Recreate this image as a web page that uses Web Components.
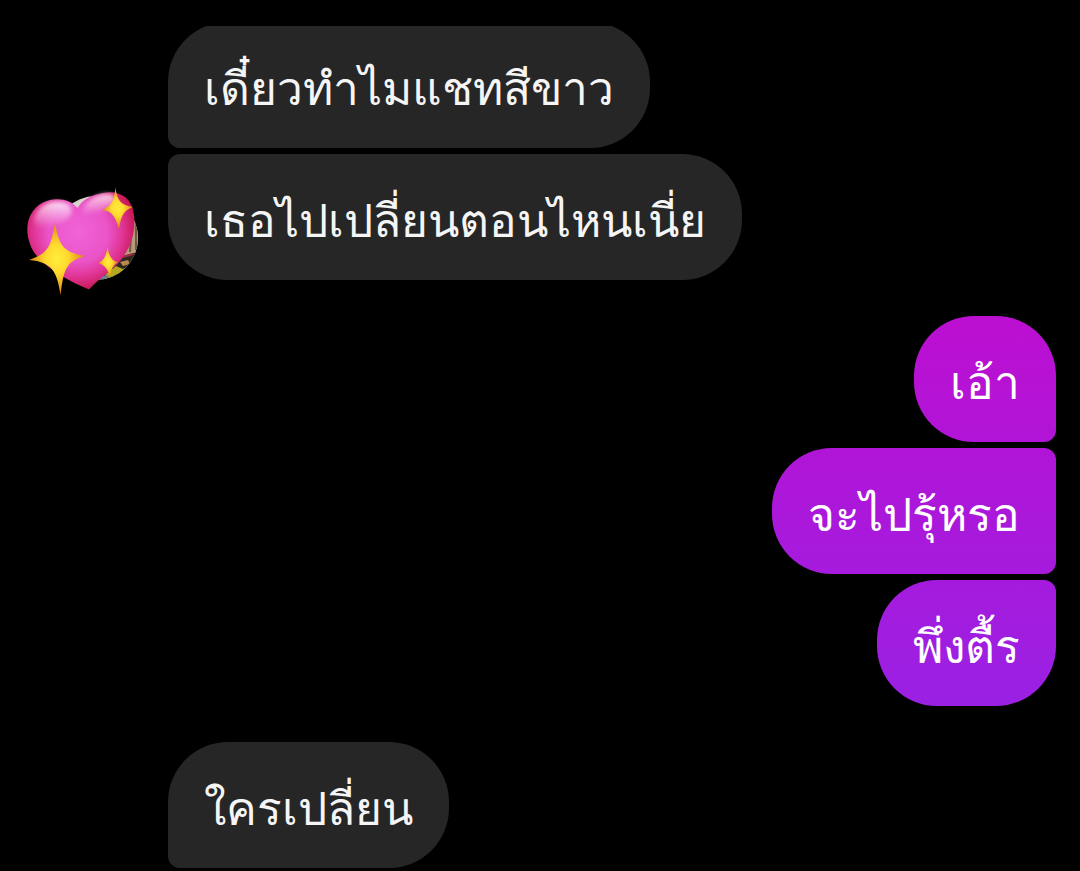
<!DOCTYPE html>
<html lang="th">
<head>
<meta charset="utf-8">
<meta name="viewport" content="width=device-width, initial-scale=1">
<title>แชท</title>
<style>
  html { background: #000; }
  body { margin: 0; background: #000; overflow: hidden; font-family: Roboto, sans-serif; }
</style>
</head>
<body>
<chat-thread>
  <message-group side="in">
    <chat-avatar slot="avatar"></chat-avatar>
    <chat-bubble side="in" place="middle">เดี๋ยวทำไมแชทสีขาว</chat-bubble>
    <chat-bubble side="in" place="last">เธอไปเปลี่ยนตอนไหนเนี่ย</chat-bubble>
  </message-group>
  <message-group side="out">
    <chat-bubble side="out" place="first">เอ้า</chat-bubble>
    <chat-bubble side="out" place="middle">จะไปรุ้หรอ</chat-bubble>
    <chat-bubble side="out" place="last">พึ่งตื้ร</chat-bubble>
  </message-group>
  <message-group side="in">
    <chat-bubble side="in" place="first">ใครเปลี่ยน</chat-bubble>
  </message-group>
</chat-thread>

<script>
class ChatThread extends HTMLElement {
  constructor() {
    super();
    this.attachShadow({ mode: "open" }).innerHTML = `
      <style>
        :host { display: block; padding: 26px 24px 0; }
        main { display: flow-root; overflow: clip; }
        .list { display: flex; flex-direction: column; gap: 36px; margin-top: -4px; }
      </style>
      <main><div class="list"><slot></slot></div></main>`;
  }
}

class MessageGroup extends HTMLElement {
  constructor() {
    super();
    this.attachShadow({ mode: "open" }).innerHTML = `
      <style>
        :host { display: grid; grid-template-columns: 120px 1fr; column-gap: 24px; align-items: end; }
        .bubbles { display: flex; flex-direction: column; gap: 6px; align-items: flex-start; }
        :host([side="out"]) { grid-template-columns: 1fr; }
        :host([side="out"]) .side { display: none; }
        :host([side="out"]) .bubbles { align-items: flex-end; }
      </style>
      <div class="side"><slot name="avatar"></slot></div>
      <div class="bubbles"><slot></slot></div>`;
  }
}

class ChatBubble extends HTMLElement {
  constructor() {
    super();
    this.attachShadow({ mode: "open" }).innerHTML = `
      <style>
        :host {
          display: block; box-sizing: border-box; padding: 36px 36px 28px;
          border-radius: 60px; background: #262626; color: #f5f5f5;
          font-size: 46px; line-height: 62px; white-space: nowrap;
        }
        :host([side="in"][place="first"]), :host([side="in"][place="middle"]) { border-bottom-left-radius: 12px; }
        :host([side="in"][place="last"]) { border-top-left-radius: 12px; }
        :host([side="out"]) { background: linear-gradient(#d701c2, #8c28eb) fixed; color: #fff; }
        :host([side="out"][place="first"]) { border-bottom-right-radius: 12px; }
        :host([side="out"][place="middle"]) { border-top-right-radius: 12px; border-bottom-right-radius: 12px; }
        :host([side="out"][place="last"]) { border-top-right-radius: 12px; }
      </style>
      <slot></slot>`;
  }
}

class ChatAvatar extends HTMLElement {
  constructor() {
    super();
    this.attachShadow({ mode: "open" }).innerHTML = `
      <style>
        :host { display: block; }
        svg { display: block; overflow: visible; }
      </style>
      <svg width="120" height="96" viewBox="24 184 120 96" role="img" aria-label="avatar">
        <defs>
          <clipPath id="disc"><circle cx="96" cy="238" r="42"/></clipPath>
          <radialGradient id="heart" gradientUnits="userSpaceOnUse" cx="78" cy="232" r="60">
            <stop offset="0" stop-color="#f064d8"/><stop offset=".5" stop-color="#ea54c8"/>
            <stop offset=".75" stop-color="#e03494"/><stop offset="1" stop-color="#c4144c"/>
          </radialGradient>
          <linearGradient id="shine" x1="0" y1="0" x2="0" y2="1">
            <stop offset="0" stop-color="#fff" stop-opacity=".85"/><stop offset="1" stop-color="#ffd0f2" stop-opacity="0"/>
          </linearGradient>
          <radialGradient id="star">
            <stop offset="0" stop-color="#ffee3c"/><stop offset=".4" stop-color="#ffd92e"/><stop offset="1" stop-color="#d98218"/>
          </radialGradient>
          <filter id="soft" x="-30%" y="-30%" width="160%" height="160%"><feGaussianBlur stdDeviation="2"/></filter>
        </defs>
        <g clip-path="url(#disc)">
          <rect x="54" y="195" width="84" height="85" fill="#d9d5cc"/>
          <path d="M126 215h14v40h-18z" fill="#b59b78"/>
          <path d="M132 218l-2 34M136 222v28" stroke="#6e5947" stroke-width="2"/>
          <path d="M114 258l24-6v30h-40z" fill="#302820"/>
          <path d="M123 257l10-3" stroke="#a22c48" stroke-width="2"/>
          <path d="M106 274l10-8 7 3 8-4 2 6-10 9h-20z" fill="#b5a622"/>
          <path d="M120 262l8-2 2 4-7 2z" fill="#b98a4c"/>
          <path d="M96 277l12-2 2 8H96z" fill="#658594"/>
        </g>
        <path d="M77.500 208C71 199 54 196 42 203C28 211 24 228 30 244C34 256 46 266 60 275C70 281 80 286 89 289.500C98 279 112 271 121 260C131 247 136 232 134 215C132 197 119 190 103 193C91 195 82 200 77.500 208Z" fill="url(#heart)"/>
        <path d="M34 220C36 208 48 200 61 202C71 203 74 210 70 216C63 226 47 224 37 229Z" fill="url(#shine)" filter="url(#soft)"/>
        <path d="M82 212C85 200 98 193 109 194C118 195 118 203 108 208C98 213 90 210 83 216Z" fill="url(#shine)" filter="url(#soft)"/>
        <path d="M55 222C59 247 64 252 85 256C66 262 64 268 60.500 295C57 271 52 262 29 260C48 253 51 248 55 222Z" fill="url(#star)"/>
        <path d="M115.500 187C117 201 121 205 133 207C123 211 121 216 119 229C115 216 112 211 102 210C112 205 114 202 115.500 187Z" fill="url(#star)"/>
        <path d="M107.500 246C109 257 112 261 118 262C112 266 111 270 110 278C108 269 105 265 98 263C104 260 106 257 107.500 246Z" fill="url(#star)"/>
      </svg>`;
  }
}

customElements.define("chat-thread", ChatThread);
customElements.define("message-group", MessageGroup);
customElements.define("chat-bubble", ChatBubble);
customElements.define("chat-avatar", ChatAvatar);
</script>
</body>
</html>
